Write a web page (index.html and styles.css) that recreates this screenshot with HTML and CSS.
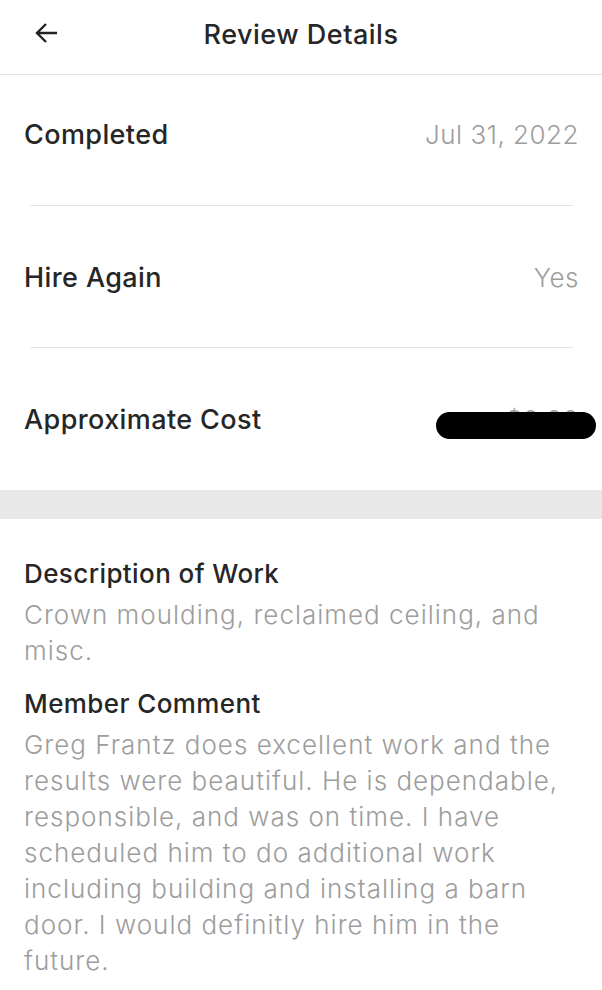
FILE: index.html
```html
<!DOCTYPE html>
<html lang="en">
<head>
    <meta charset="UTF-8">
    <title>Review Details</title>
    <link rel="stylesheet" href="styles.css">
</head>
<body>
<div id="page">
    <div class="header">
        <span class="back">
            <svg width="24" height="22" viewBox="0 0 24 22"><path d="M22 11H3M11 2L2 11l9 9" fill="none" stroke="#222" stroke-width="2.4"/></svg>
        </span>
        <h1>Review Details</h1>
    </div>

    <div class="row first">
        <span class="label">Completed</span>
        <span class="value">Jul 31, 2022</span>
    </div>
    <div class="row">
        <span class="label">Hire Again</span>
        <span class="value">Yes</span>
    </div>
    <div class="row last">
        <span class="label">Approximate Cost</span>
        <span class="value cost">$0.00<i class="redact"></i></span>
    </div>

    <div class="band"></div>

    <div class="section">
        <h2>Description of Work</h2>
        <p>Crown moulding, reclaimed ceiling, and misc.</p>
        <h2>Member Comment</h2>
        <p>Greg Frantz does excellent work and the results were beautiful. He is dependable, responsible, and was on time. I have scheduled him to do additional work including building and installing a barn door. I would definitly hire him in the future.</p>
    </div>
</div>
</body>
</html>
```

FILE: styles.css
```css
body{
    margin: 0;
    background: #fff;
    font-family: "Inter", "Noto Sans", sans-serif;
    color: #262626;
}
#page{
    width: 602px;
}
.header{
    position: relative;
    height: 74px;
    border-bottom: 1px solid #e2e2e2;
    display: flex;
    align-items: center;
    justify-content: center;
}
.header h1{
    margin: 0 0 6px 0;
    font-size: 27px;
    font-weight: 500;
    letter-spacing: 0.5px;
}
.back{
    position: absolute;
    left: 35px;
    top: 22px;
}

.row{
    position: relative;
    height: 142px;
    padding: 0 23px 0 24px;
    display: flex;
    align-items: center;
    justify-content: space-between;
}
.row::after{
    content: "";
    position: absolute;
    left: 30px;
    right: 29px;
    bottom: 0;
    border-bottom: 1px solid #e4e4e4;
}
.row.first{
    box-sizing: border-box;
    height: 131px;
    padding-bottom: 12px;
}
.row.last::after{
    display: none;
}
.label{
    font-size: 27px;
    font-weight: 500;
    letter-spacing: 0.4px;
}
.value{
    font-size: 26px;
    font-weight: 300;
    letter-spacing: 0.5px;
    color: #9d9d9d;
}
.cost{
    position: relative;
}
.redact{
    position: absolute;
    right: -17px;
    top: 8px;
    width: 160px;
    height: 27px;
    border-radius: 14px;
    background: #000;
}

.band{
    height: 29px;
    background: #e8e8e8;
}

.section{
    padding: 37px 24px 0 24px;
}
.section h2{
    margin: 0;
    font-size: 26px;
    font-weight: 500;
    letter-spacing: 0.4px;
    line-height: 36px;
}
.section p{
    margin: 5px 0 17px 0;
    font-size: 26px;
    font-weight: 300;
    line-height: 36px;
    letter-spacing: 1px;
    color: #9d9d9d;
}
```
